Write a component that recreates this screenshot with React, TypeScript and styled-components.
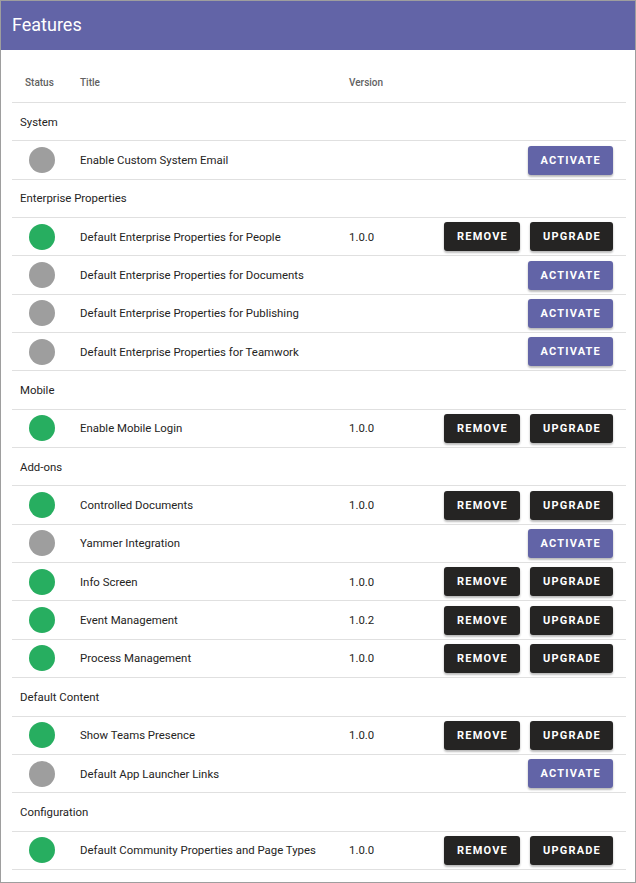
import * as React from 'react'
import styled, { createGlobalStyle } from 'styled-components'

const GlobalStyle = createGlobalStyle`
  html, body {
    margin: 0;
    padding: 0;
    background: #fff;
    font-family: Roboto, 'Liberation Sans', sans-serif;
  }
`

const Page = styled.div`
  box-sizing: border-box;
  width: 636px;
  height: 883px;
  border: 1px solid #9e9e9e;
  overflow: hidden;
  background: #fff;
`

const Header = styled.div`
  height: 49px;
  background: #6264a7;
  color: #fff;
  display: flex;
  align-items: center;
  padding-left: 11px;
  font-size: 18px;
  padding-bottom: 2px;
  box-sizing: border-box;
`

const Table = styled.div`
  padding: 12px 9px 0 11px;
`

const Row = styled.div<{ head?: boolean }>`
  box-sizing: border-box;
  display: grid;
  grid-template-columns: 68px 269px 1fr auto;
  align-items: center;
  height: ${(p) => (p.head ? '41px' : '38.35px')};
  border-bottom: 1px solid #e0e0e0;
  font-size: 11.4px;
  color: #252423;
`

const HeadCell = styled.div`
  font-size: 10px;
  font-weight: 500;
  color: #616161;
  padding-top: 1px;
`

const StatusHead = styled(HeadCell)`
  padding-left: 13px;
`

const GroupRow = styled.div`
  box-sizing: border-box;
  height: 38.35px;
  display: flex;
  align-items: center;
  padding-left: 8px;
  border-bottom: 1px solid #e0e0e0;
  font-size: 11.4px;
  color: #252423;
`

const Dot = styled.div<{ active: boolean }>`
  width: 26px;
  height: 26px;
  border-radius: 50%;
  margin-left: 17px;
  background: ${(p) => (p.active ? '#27ae60' : '#9e9e9e')};
`

const Actions = styled.div`
  display: flex;
  gap: 10px;
  padding-right: 13px;
`

const Button = styled.button<{ primary?: boolean }>`
  height: 29px;
  padding: 0 12px 0 13px;
  border: none;
  border-radius: 3px;
  background: ${(p) => (p.primary ? '#6264a7' : '#252423')};
  color: #fff;
  font-family: Roboto, 'Liberation Sans', sans-serif;
  font-size: 11px;
  font-weight: 700;
  letter-spacing: 1.2px;
  box-shadow: 0 2px 2px rgba(0, 0, 0, 0.2), 0 1px 3px rgba(0, 0, 0, 0.12);
  cursor: pointer;
`

interface Feature {
  title: string
  version?: string
}

const groups: { name: string; items: Feature[] }[] = [
  { name: 'System', items: [{ title: 'Enable Custom System Email' }] },
  {
    name: 'Enterprise Properties',
    items: [
      { title: 'Default Enterprise Properties for People', version: '1.0.0' },
      { title: 'Default Enterprise Properties for Documents' },
      { title: 'Default Enterprise Properties for Publishing' },
      { title: 'Default Enterprise Properties for Teamwork' },
    ],
  },
  { name: 'Mobile', items: [{ title: 'Enable Mobile Login', version: '1.0.0' }] },
  {
    name: 'Add-ons',
    items: [
      { title: 'Controlled Documents', version: '1.0.0' },
      { title: 'Yammer Integration' },
      { title: 'Info Screen', version: '1.0.0' },
      { title: 'Event Management', version: '1.0.2' },
      { title: 'Process Management', version: '1.0.0' },
    ],
  },
  {
    name: 'Default Content',
    items: [
      { title: 'Show Teams Presence', version: '1.0.0' },
      { title: 'Default App Launcher Links' },
    ],
  },
  {
    name: 'Configuration',
    items: [{ title: 'Default Community Properties and Page Types', version: '1.0.0' }],
  },
]

const FeatureRow: React.FC<{ feature: Feature }> = ({ feature }) => {
  const installed = !!feature.version
  return (
    <Row>
      <Dot active={installed} />
      <div>{feature.title}</div>
      <div>{feature.version}</div>
      <Actions>
        {installed ? (
          <>
            <Button>REMOVE</Button>
            <Button>UPGRADE</Button>
          </>
        ) : (
          <Button primary>ACTIVATE</Button>
        )}
      </Actions>
    </Row>
  )
}

export default function App() {
  return (
    <Page>
      <GlobalStyle />
      <Header>Features</Header>
      <Table>
        <Row head>
          <StatusHead>Status</StatusHead>
          <HeadCell>Title</HeadCell>
          <HeadCell>Version</HeadCell>
          <div />
        </Row>
        {groups.map((g) => (
          <React.Fragment key={g.name}>
            <GroupRow>{g.name}</GroupRow>
            {g.items.map((f) => (
              <FeatureRow key={f.title} feature={f} />
            ))}
          </React.Fragment>
        ))}
      </Table>
    </Page>
  )
}
